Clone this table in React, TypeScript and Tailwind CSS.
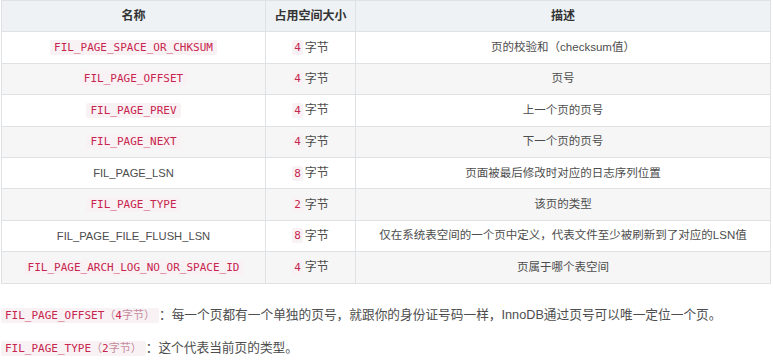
import React from "react";

const sans = { fontFamily: '"Liberation Sans", "Noto Sans CJK SC", sans-serif' };
const mono = { fontFamily: '"DejaVu Sans Mono", "Liberation Mono", "Noto Sans CJK SC", monospace' };

type Row = { name: string; code: boolean; size: string; desc: string };

const rows: Row[] = [
  { name: "FIL_PAGE_SPACE_OR_CHKSUM", code: true, size: "4", desc: "页的校验和（checksum值）" },
  { name: "FIL_PAGE_OFFSET", code: true, size: "4", desc: "页号" },
  { name: "FIL_PAGE_PREV", code: true, size: "4", desc: "上一个页的页号" },
  { name: "FIL_PAGE_NEXT", code: true, size: "4", desc: "下一个页的页号" },
  { name: "FIL_PAGE_LSN", code: false, size: "8", desc: "页面被最后修改时对应的日志序列位置" },
  { name: "FIL_PAGE_TYPE", code: true, size: "2", desc: "该页的类型" },
  { name: "FIL_PAGE_FILE_FLUSH_LSN", code: false, size: "8", desc: "仅在系统表空间的一个页中定义，代表文件至少被刷新到了对应的LSN值" },
  { name: "FIL_PAGE_ARCH_LOG_NO_OR_SPACE_ID", code: true, size: "4", desc: "页属于哪个表空间" },
];

function Code({ children, px = "px-[4px]" }: { children: React.ReactNode; px?: string }) {
  return (
    <span
      style={mono}
      className={`inline-block ${px} leading-[15px] text-[11px] text-[#c7254e] bg-[#f9f2f4] rounded-[2px]`}
    >
      {children}
    </span>
  );
}

export default function App() {
  return (
    <div className="w-[773px] h-[361px] bg-white overflow-hidden text-[#4d4d4d]" style={sans}>
      <div className="ml-[1px] w-[770px] border border-[#dfe2e5] border-b-0">
        <div className="grid grid-cols-[264px_90px_414px] h-[31.4px] bg-[#eef2f5] border-b border-[#dfe2e5] text-[12px] font-bold text-[#333]">
          <div className="flex items-center justify-center border-r border-[#dfe2e5]">名称</div>
          <div className="flex items-center justify-center border-r border-[#dfe2e5]">占用空间大小</div>
          <div className="flex items-center justify-center">描述</div>
        </div>
        {rows.map((r, i) => (
          <div
            key={r.name}
            className={`grid grid-cols-[264px_90px_414px] h-[31.4px] border-b border-[#dfe2e5] text-[11.5px] ${
              i % 2 === 1 ? "bg-[#f6f6f6]" : "bg-white"
            }`}
          >
            <div className="flex items-center justify-center border-r border-[#dfe2e5]">
              {r.code ? <Code>{r.name}</Code> : <span className="text-[11.2px] text-[#4d4d4d]">{r.name}</span>}
            </div>
            <div className="flex items-center justify-center border-r border-[#dfe2e5] gap-[2px]">
              <Code px="px-[2px]">{r.size}</Code>
              <span className="text-[12px]">字节</span>
            </div>
            <div className="flex items-center justify-center">{r.desc}</div>
          </div>
        ))}
      </div>
      <p className="mt-[19px] ml-[1px] leading-[24px] text-[12.7px] text-[#4d4d4d]">
        <Code>
          FIL_PAGE_OFFSET<span className="text-[#c58a9d]">（</span>4<span className="text-[#c58a9d]">字节）</span>
        </Code>
        <span>：每一个页都有一个单独的页号，就跟你的身份证号码一样，InnoDB通过页号可以唯一定位一个页。</span>
      </p>
      <p className="mt-[9px] ml-[1px] leading-[24px] text-[12.7px] text-[#4d4d4d]">
        <Code>
          FIL_PAGE_TYPE<span className="text-[#c58a9d]">（</span>2<span className="text-[#c58a9d]">字节）</span>
        </Code>
        <span>：这个代表当前页的类型。</span>
      </p>
    </div>
  );
}
